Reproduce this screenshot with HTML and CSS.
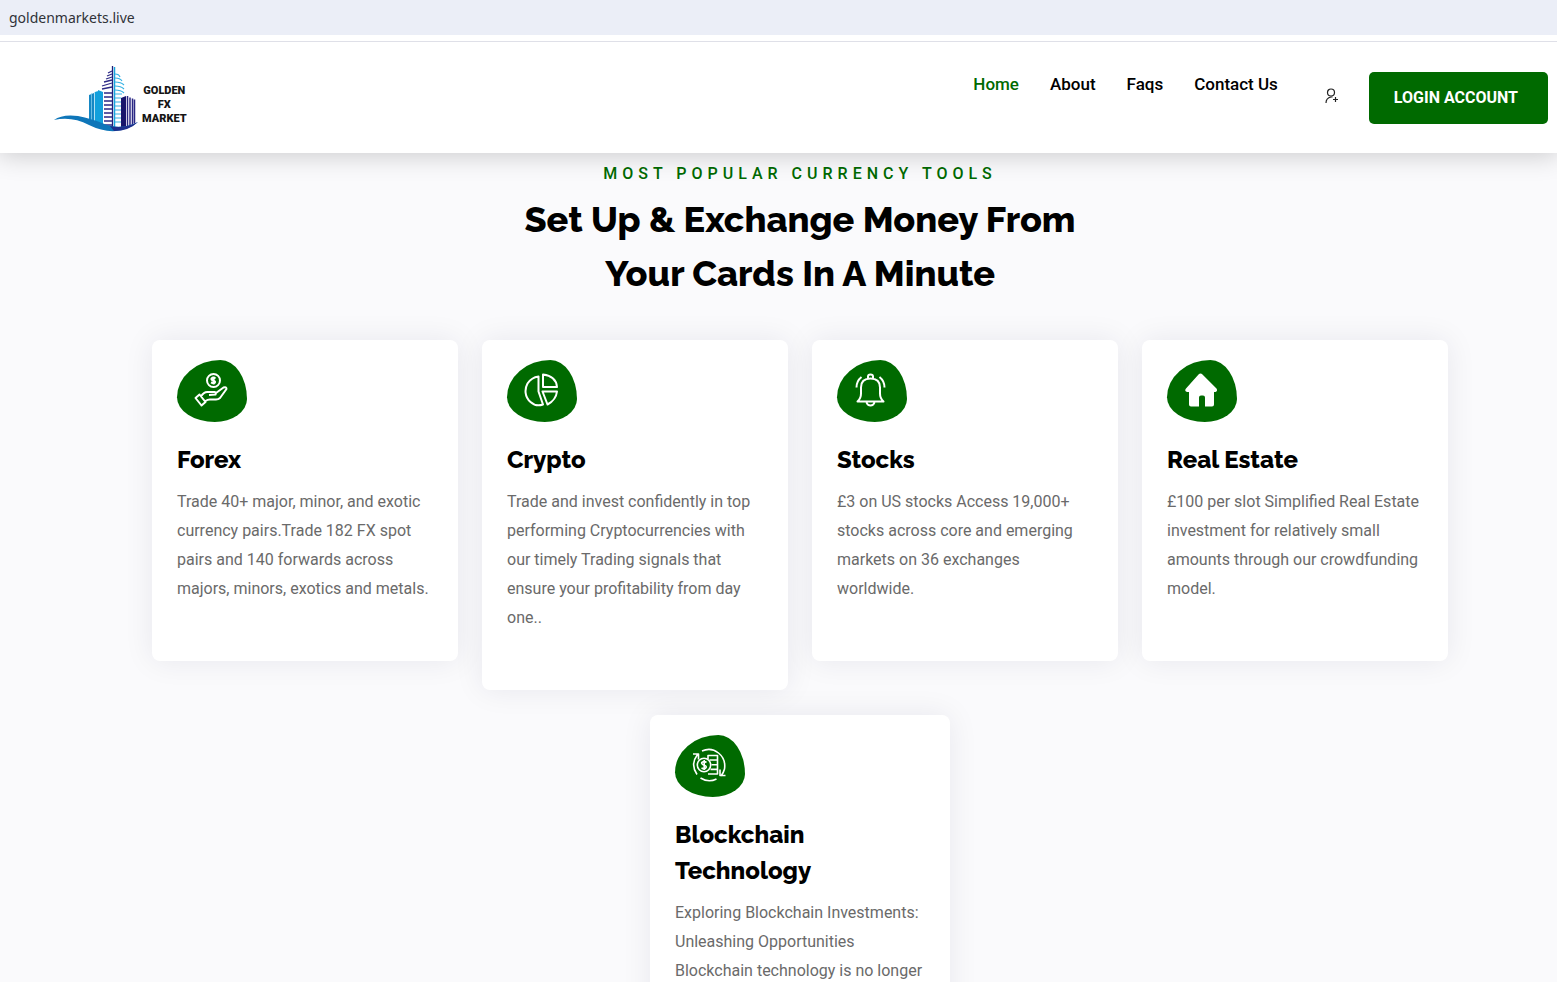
FILE: index.html
```html
<!DOCTYPE html>
<html lang="en">
<head>
  <meta charset="UTF-8" />
  <meta name="viewport" content="width=device-width, initial-scale=1.0"/>
  <title>Golden FX Market</title>
  <link rel="stylesheet" href="styles.css">
</head>
<body>
  <div class="address-bar">goldenmarkets.live</div>

  <header class="header">
    <a class="logo" href="#">
      <svg class="logo-mark" viewBox="14 11 84 68" aria-hidden="true">
        <!-- left block -->
        <path d="M49 40l5-2v29l-5-3z" fill="#1687c4"/>
        <path d="M55 37l3-1v32l-3-1zM58 35l5 2v33l-5-1z" fill="#12a0dc"/>
        <path d="M51.500 38v27M54.500 37v29" stroke="#8fd4f2" stroke-width=".7"/>
        <!-- middle tower -->
        <path d="M72.500 11v61" stroke="#201f78" stroke-width="1.300"/>
        <path d="M74.500 12v62" stroke="#19a5df" stroke-width="1.500"/>
        <path d="M68 18l4-2M67 21l5-2M66 24l6-2M64 27l8-2M62 31l10-3M62 34l10-2M64 38h8M64 42h8M64 46h8M64 50h8M64 54h8M64 58h8M64 62h8M64 66h8M64 70h8" stroke="#2d2a86" stroke-width="1.300"/>
        <path d="M75 19q4 0 5 3M75 23q5 0 7 3M75 27q6 0 9 3M75 31q6 0 9 3M75 35q6 0 9 3M75 39h7M75 43h6M75 47h6M75 51h6M75 55h6M75 59h6M75 63h6M75 67h6" fill="none" stroke="#35b2e4" stroke-width="1.200"/>
        <!-- right block -->
        <path d="M81 43l5-2v32h-5z" fill="#17146b"/>
        <path d="M87.500 41v31M90 42.500v29M92.500 43.500v26M94.500 44.500v24" stroke="#2a2784" stroke-width="1.500"/>
        <!-- wave -->
        <path d="M14 65q8-6 24-4q14 3 24 7q18 8 36-1q-10 8-22 9q-13 1-27-6q-17-9-35-5z" fill="#0e76b9"/>
        <path d="M70 71q14 3 28-4q-9 9-24 9z" fill="#1d2e8c"/>
      </svg>
      <span class="logo-text">GOLDEN<br>FX<br>MARKET</span>
    </a>
    <nav class="nav">
      <a class="active" href="#">Home</a>
      <a href="#">About</a>
      <a href="#">Faqs</a>
      <a href="#">Contact Us</a>
    </nav>
    <a class="register" href="#" aria-label="Register">
      <svg viewBox="0 0 14 16" fill="none" stroke="#222" stroke-width="1.200">
        <circle cx="6" cy="4.500" r="3.500"/>
        <path d="M1 15q0-5 5-6h1.500M10.500 9v5M8 11.500h5"/>
      </svg>
    </a>
    <a class="login" href="#">LOGIN ACCOUNT</a>
  </header>

  <main class="tools">
    <p class="eyebrow">MOST POPULAR CURRENCY TOOLS</p>
    <h2>Set Up &amp; Exchange Money From<br>Your Cards In A Minute</h2>

    <div class="cards">
      <article class="card">
        <div class="icon">
          <svg viewBox="0 0 34 34">
            <circle cx="19.500" cy="7.500" r="6.500"/>
            <path d="M21.500 5.500q-2-1.500-3.500-.5t.5 2.300q3 .8 2.500 2.200t-4 0M19.500 3.500v8"/>
            <path d="M1.500 25l4-3.500 6 7.500-4 3.500zM7 23.500q3-5 7-4.500h6.500q2 .5 1 2.500l-6.500.5M22 20l7.500-5.500q3-1 3 1.500l-6.500 9q-1.500 1.500-4 1.500h-6q-2.500 0-4.500 1.500"/>
          </svg>
        </div>
        <h3>Forex</h3>
        <p>Trade 40+ major, minor, and exotic currency pairs.Trade 182 FX spot pairs and 140 forwards across majors, minors, exotics and metals.</p>
      </article>

      <article class="card">
        <div class="icon">
          <svg viewBox="0 0 34 34">
            <path d="M14.500 3.500v15l4.500 13q-7 2.500-12.500-2.500c-6-5-6-13-3-18.500q4-6 11-7zM19 1.500q13 1.500 14 12.500h-14zM18.500 18.500h14.500q-1 8.500-9.500 13z"/>
          </svg>
        </div>
        <h3>Crypto</h3>
        <p>Trade and invest confidently in top performing Cryptocurrencies with our timely Trading signals that ensure your profitability from day one..</p>
      </article>

      <article class="card">
        <div class="icon">
          <svg viewBox="0 0 34 34">
            <path d="M3.500 28.500q3.500-3 3.500-8v-6q0-9 9.500-9t9.500 9v6q0 5 3.500 8zM14 5.500v-2q0-2 2.500-2t2.500 2v2M12.500 29.500q1 3 4 3t4-3M7.500 4q-5 4-5 10.500M25.500 4q5 4 5 10.500"/>
          </svg>
        </div>
        <h3>Stocks</h3>
        <p>£3 on US stocks Access 19,000+ stocks across core and emerging markets on 36 exchanges worldwide.</p>
      </article>

      <article class="card">
        <div class="icon">
          <svg class="solid" viewBox="0 0 34 34">
            <path d="M14.500 1.500q2-1.800 4 0l14 14q1.500 2.500-1 3.500h-1.500v12.500q0 2-2 2h-7v-9q0-2-2-2h-2q-2 0-2 2v9h-8q-2 0-2-2v-12.500h-2q-3-1-1-3.500z"/>
          </svg>
        </div>
        <h3>Real Estate</h3>
        <p>£100 per slot Simplified Real Estate investment for relatively small amounts through our crowdfunding model.</p>
      </article>
    </div>

    <div class="cards-extra">
      <article class="card">
        <div class="icon">
          <svg class="thin" viewBox="0 0 34 34">
            <path d="M5 26.500q-7-10 .5-20M1 6h5.500v5.500M10 3q9-4 16.500 2t6 16q-1 4-3.500 7M33.500 27.500h-5.500v-6M24.500 31q-8 4-16-1"/>
            <circle cx="12" cy="17" r="6.700"/>
            <path d="M14.500 14.500q-2-1.500-4-.5t.5 2.700q4 1 3 3t-4.500.3M12.200 12v10M16 11v-3.500h9.500v18.500h-9.500M17.500 12h8M19.500 16.700h6M18.500 21.400h7"/>
          </svg>
        </div>
        <h3>Blockchain Technology</h3>
        <p>Exploring Blockchain Investments: Unleashing Opportunities Blockchain technology is no longer</p>
      </article>
    </div>
  </main>
</body>
</html>
```
FILE: styles.css
```css
* {
  box-sizing: border-box;
}
body {
  margin: 0;
  height: 100vh;
  overflow: hidden;
  background-color: #fafafc;
  color: #000;
  font-family: Roboto, Arial, sans-serif;
  font-size: 16px;
}
a {
  color: inherit;
  text-decoration: none;
}
.address-bar {
  position: relative;
  z-index: 2;
  height: 42px;
  padding-left: 9px;
  background: linear-gradient(#ebeef7 35px, #fff 35px);
  border-bottom: 1px solid #dfe0e8;
  color: #303238;
  font-family: "Noto Sans", sans-serif;
  font-size: 14px;
  line-height: 36px;
}
.header {
  position: relative;
  z-index: 1;
  display: flex;
  align-items: flex-start;
  height: 111px;
  padding: 24px 9px 0 54px;
  background-color: #fff;
  box-shadow: 0 0 25px 2px rgba(0, 0, 0, 0.2);
}
.logo {
  display: flex;
  gap: 4px;
  margin-right: auto;
}
.logo-mark {
  width: 84px;
  height: 68px;
}
.logo-text {
  padding-top: 18px;
  color: #151515;
  font-size: 11px;
  font-weight: 900;
  line-height: 14px;
  text-align: center;
}
.nav {
  display: flex;
  gap: 31px;
  padding-top: 6px;
  font-size: 17px;
  font-weight: 500;
  line-height: 24px;
}
.nav .active {
  color: #006a00;
}
.register {
  margin: 22px 30px 0 47px;
}
.register svg {
  display: block;
  width: 14px;
  height: 16px;
}
.login {
  margin-top: 6px;
  padding: 0 30px 0 25px;
  border-radius: 5px;
  background-color: #006a00;
  color: #fff;
  font-weight: 700;
  line-height: 52px;
}
.tools {
  padding: 6px 0 0 43px;
}
.eyebrow {
  margin: 0 0 4px;
  color: #006a00;
  font-weight: 500;
  letter-spacing: 5px;
  line-height: 29px;
  text-align: center;
}
h2,
h3 {
  font-family: Raleway, Lato, sans-serif;
  font-weight: 800;
}
h2 {
  margin: 0 0 40px;
  font-size: 36px;
  line-height: 54px;
  text-align: center;
}
.cards {
  display: grid;
  grid-template-columns: repeat(4, 1fr);
  align-items: start;
  gap: 24px;
  max-width: 1320px;
  margin: 0 auto;
  padding: 0 12px;
}
.cards-extra {
  max-width: 300px;
  margin: 25px auto 0;
}
.card {
  padding: 20px 25px 58px;
  border-radius: 8px;
  background-color: #fff;
  box-shadow: 0 0 30px rgba(20, 20, 60, 0.08);
}
.icon {
  display: flex;
  align-items: center;
  justify-content: center;
  width: 70px;
  height: 62px;
  margin-bottom: 20px;
  padding: 0 2px 2px 0;
  border-radius: 62% 38% 46% 54% / 60% 63% 37% 40%;
  background-color: #006a00;
}
.icon svg {
  width: 34px;
  height: 34px;
  fill: none;
  stroke: #fff;
  stroke-width: 2;
  stroke-linejoin: round;
}
.icon .thin {
  stroke-width: 1.6;
}
.icon .solid {
  fill: #fff;
  stroke: none;
}
h3 {
  margin: 0 0 9px;
  font-size: 24px;
  line-height: 36px;
}
.card p {
  margin: 0;
  color: #6a6a6a;
  line-height: 29px;
}
```
